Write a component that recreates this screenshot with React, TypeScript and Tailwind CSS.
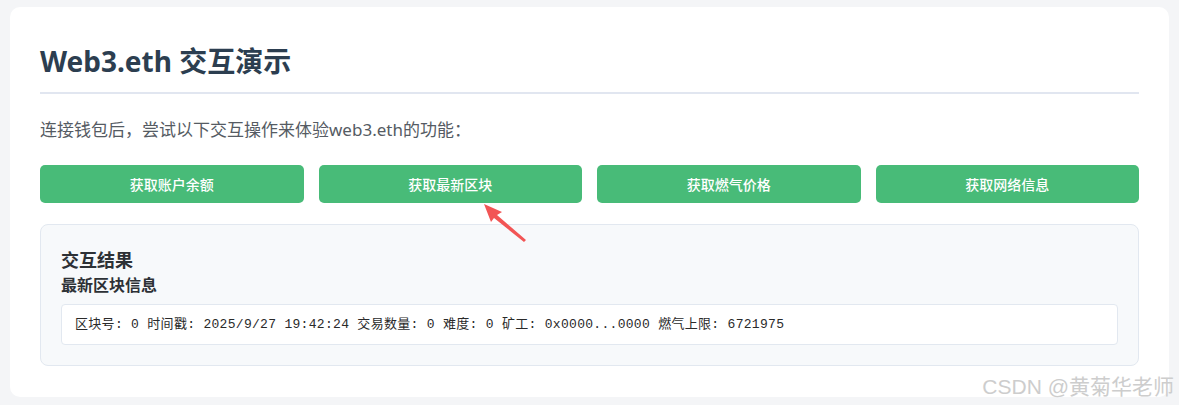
import React from "react";

const cn = '"Noto Sans", "Noto Sans CJK SC", sans-serif';

export default function App() {
  const buttons = ["获取账户余额", "获取最新区块", "获取燃气价格", "获取网络信息"];
  return (
    <div
      className="relative w-[1179px] h-[405px] bg-[#f4f5f7] overflow-hidden pt-[7px] pl-[10px] pr-[10px]"
      style={{ fontFamily: cn }}
    >
      <div className="w-[1159px] h-[390px] bg-white rounded-[10px] px-[30px] pt-[30px]">
        <h1 className="text-[28px] font-bold text-[#2c3e50] leading-[48px] pb-[7px] border-b-2 border-[#e1e6f0]">
          Web3.eth 交互演示
        </h1>
        <p className="mt-[23px] text-[17px] text-[#555b63] leading-[26px]">
          连接钱包后，尝试以下交互操作来体验web3.eth的功能：
        </p>
        <div className="mt-[22px] grid grid-cols-4 gap-[15px]">
          {buttons.map((b) => (
            <button
              key={b}
              className="h-[38px] rounded-[5px] bg-[#48bb78] text-white text-[14px] font-medium"
            >
              {b}
            </button>
          ))}
        </div>
        <div className="mt-[21px] h-[142px] rounded-[8px] border border-[#e2e8f0] bg-[#f7f9fb] px-[20px] pt-[22px]">
          <h3 className="text-[18px] font-bold text-[#2d3136] leading-[26px]">交互结果</h3>
          <h4 className="text-[16px] font-bold text-[#2d3136] leading-[24px]">最新区块信息</h4>
          <div className="mt-[7px] h-[41px] rounded-[4px] border border-[#e2e8f0] bg-white px-[13px] flex items-center">
            <span
              className="text-[13px] text-[#2a2a2a] tracking-[0.3px]"
              style={{ fontFamily: '"Liberation Mono", "Noto Sans CJK SC", monospace' }}
            >
              区块号: 0 时间戳: 2025/9/27 19:42:24 交易数量: 0 难度: 0 矿工: 0x0000...0000 燃气上限: 6721975
            </span>
          </div>
        </div>
      </div>
      <svg className="absolute left-[478px] top-[198px]" width="52" height="46" viewBox="0 0 52 46">
        <polygon points="6,6 24,14 19,17 48,42 46,44 16,20 13,24" fill="#f25555" />
      </svg>
      <div
        className="absolute right-[5px] top-[371px] text-[21px] text-[#cdcdcd]"
        style={{ fontFamily: '"Liberation Sans", "Noto Sans CJK SC", sans-serif' }}
      >
        CSDN @黄菊华老师
      </div>
    </div>
  );
}
